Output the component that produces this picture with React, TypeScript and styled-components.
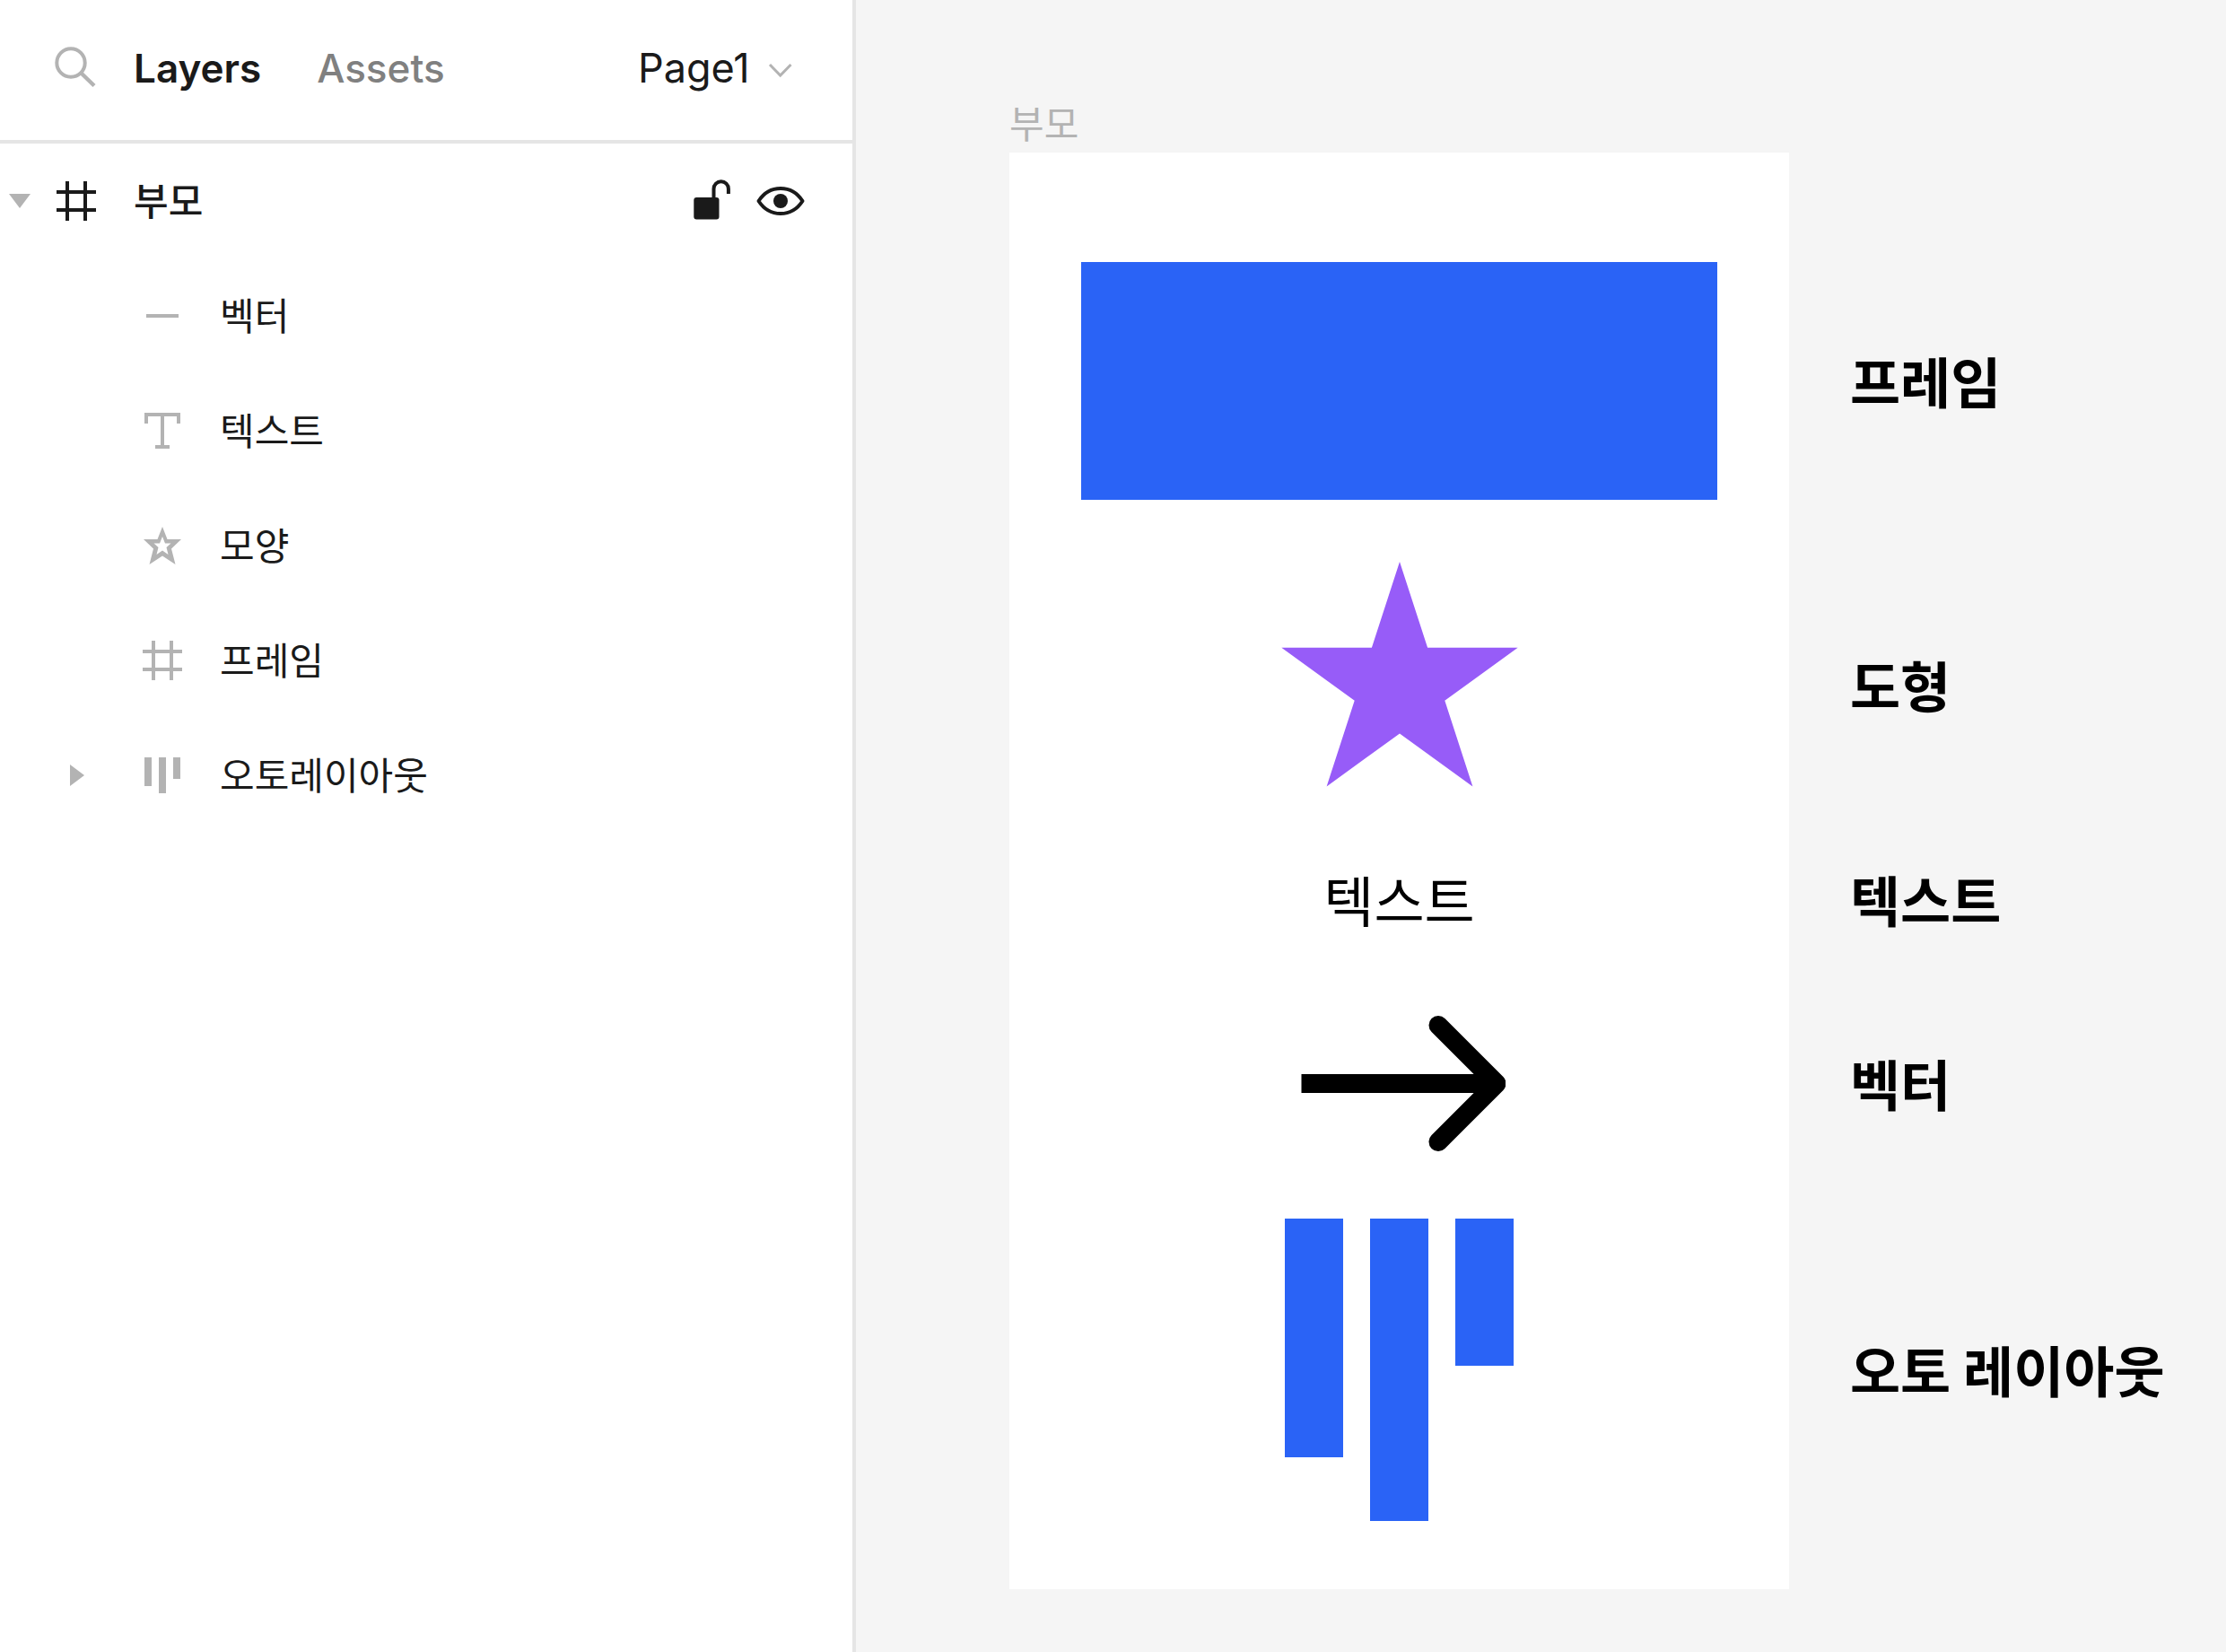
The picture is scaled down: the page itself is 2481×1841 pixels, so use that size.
import React, { useState } from "react";
import styled, { createGlobalStyle } from "styled-components";

const ink = "#1a1a1a";
const muted = "#b3b3b3";
const line = "#e5e5e5";
const blue = "#2a63f6";
const purple = "#975cf8";

const GlobalStyle = createGlobalStyle`
  *, *::before, *::after { box-sizing: border-box; }
  body {
    margin: 0;
    background: #f5f5f5;
    color: ${ink};
    font-family: Inter, "Noto Sans CJK KR", sans-serif;
  }
  button, select {
    margin: 0;
    padding: 0;
    border: 0;
    background: none;
    color: inherit;
    font: inherit;
    cursor: pointer;
  }
  svg { display: block; flex: none; }
`;

/* The specimens and their captions share one set of row heights. */
const specimenRows = "333px 346px 132px 277px 361px";

const Editor = styled.div`
  display: flex;
  min-height: 100vh;
`;

const Sidebar = styled.aside`
  flex: 0 0 954px;
  border-right: 4px solid ${line};
  background: #fff;
`;

const SidebarHeader = styled.header`
  display: flex;
  align-items: center;
  height: 160px;
  padding: 0 66px 4px 61px;
  border-bottom: 4px solid ${line};
  font-size: 44px;
  line-height: 56px;
`;

const IconButton = styled.button`
  display: flex;
  align-items: center;
  justify-content: center;
`;

const Tabs = styled.div`
  display: flex;
  gap: 62px;
  margin-left: 40px;
`;

const Tab = styled.button<{ $active: boolean }>`
  color: ${(p) => (p.$active ? ink : "#808080")};
  font-weight: ${(p) => (p.$active ? 600 : 500)};
`;

const PagePicker = styled.label`
  display: flex;
  align-items: center;
  gap: 20px;
  margin-left: auto;
  font-size: 45px;
`;

const PageSelect = styled.select`
  appearance: none;
  outline: none;
`;

const LayerTree = styled.ul`
  margin: 0;
  padding: 0;
  list-style: none;
`;

const LayerRow = styled.div<{ $nested: boolean }>`
  display: grid;
  grid-template-columns: ${(p) => (p.$nested ? "93px" : "61px")} 48px 1fr auto;
  align-items: center;
  height: 128px;
  padding: 0 52px 0 ${(p) => (p.$nested ? "64px" : "0")};
  color: ${(p) => (p.$nested ? muted : ink)};
`;

const Disclosure = styled.button`
  display: flex;
  align-items: center;
  justify-content: center;
  width: 44px;
  height: 44px;
  color: ${muted};
`;

const LayerIcon = styled.span`
  grid-column: 2;
`;

const LayerName = styled.span<{ $strong: boolean }>`
  padding: 0 0 4px 40px;
  color: ${ink};
  font-family: "Noto Sans CJK KR", sans-serif;
  font-size: 42px;
  font-weight: ${(p) => (p.$strong ? 500 : 400)};
  line-height: 60px;
`;

const LayerActions = styled.div`
  display: flex;
  align-items: center;
  gap: 24px;
`;

const Canvas = styled.main`
  flex: 1;
  display: grid;
  grid-template-columns: 869px 1fr;
  grid-template-rows: 62px auto;
  column-gap: 68px;
  align-content: start;
  padding: 108px 0 70px 171px;
  font-family: "Noto Sans CJK KR", sans-serif;
`;

const BoardTitle = styled.h1`
  grid-column: 1 / -1;
  margin: 0;
  color: ${muted};
  font-size: 42px;
  font-weight: 400;
  line-height: 56px;
`;

const Board = styled.section`
  display: grid;
  grid-template-rows: ${specimenRows};
  align-items: center;
  justify-items: center;
  padding: 88px 80px 64px;
  background: #fff;
`;

const Captions = styled.div`
  display: grid;
  grid-template-rows: ${specimenRows};
  align-items: center;
  padding: 88px 0 64px;
`;

const Caption = styled.h2`
  margin: 0;
  padding-bottom: 2px;
  color: #000;
  font-size: 61px;
  font-weight: 700;
  line-height: 88px;
`;

const FrameSpecimen = styled.div`
  width: 100%;
  height: 265px;
  background: ${blue};
`;

const TextSpecimen = styled.p`
  margin: 0;
  padding-bottom: 2px;
  color: #000;
  font-size: 61px;
  line-height: 88px;
`;

const AutoLayout = styled.div`
  display: flex;
  align-items: flex-start;
  gap: 30px;
`;

const Bar = styled.div<{ $height: number }>`
  width: 65px;
  height: ${(p) => p.$height}px;
  background: ${blue};
`;

type Kind = "frame" | "line" | "text" | "star" | "auto";

const stroke = { fill: "none", stroke: "currentColor", strokeWidth: 4 };

function KindIcon({ kind }: { kind: Kind }) {
  return (
    <svg width="48" height="48" viewBox="0 0 48 48" aria-hidden="true">
      {kind === "frame" && <path {...stroke} d="M14 2v44M34 2v44M2 14h44M2 34h44" />}
      {kind === "line" && <path {...stroke} d="M6 24h36" />}
      {kind === "text" && <path {...stroke} d="M6 16V6h36v10M24 6v36M16 42h16" />}
      {kind === "star" && (
        <path
          fill="currentColor"
          fillRule="evenodd"
          d="M24 3L29.500 17H45L34 27.500 38.500 45 24 35.500 9.500 45 14 27.500 3 17h15.500zM24 14l-3 7.500h-6.500l5 4.500-2 8L24 29.500l6.500 4.500-2-8 5-4.500H27z"
        />
      )}
      {kind === "auto" && <path fill="currentColor" d="M4 4h8v32H4zM20 4h8v40h-8zM36 4h8v24h-8z" />}
    </svg>
  );
}

const SearchIcon = () => (
  <svg width="48" height="48" viewBox="0 0 48 48" aria-hidden="true">
    <circle cx="18" cy="18" r="15.7" fill="none" stroke={muted} strokeWidth="4" />
    <path d="M29.500 29.500L44 43.500" fill="none" stroke={muted} strokeWidth="4.500" />
  </svg>
);

const ChevronIcon = () => (
  <svg width="28" height="28" viewBox="0 0 28 28" aria-hidden="true">
    <path d="M2 10l11.700 12L25.500 10" fill="none" stroke={muted} strokeWidth="3" />
  </svg>
);

const UnlockIcon = () => (
  <svg width="48" height="48" viewBox="0 0 48 48" aria-hidden="true">
    <rect x="3.300" y="20" width="28.200" height="24.500" rx="3" fill="currentColor" />
    <path {...stroke} d="M25.500 22V10.500a8.200 8.200 0 0 1 16.400 0V16" />
  </svg>
);

const EyeIcon = () => (
  <svg width="56" height="56" viewBox="0 0 56 56" aria-hidden="true">
    <path
      {...stroke}
      strokeLinejoin="round"
      d="M3.500 28C10 18 19 14 28 14s18 4 24.500 14C46 38 37 42 28 42S10 38 3.500 28z"
    />
    <circle cx="28" cy="28" r="8" fill="currentColor" />
  </svg>
);

const Triangle = ({ open }: { open: boolean }) =>
  open ? (
    <svg width="24" height="16" viewBox="0 0 24 16" aria-hidden="true">
      <path d="M0 0h24L12 16z" fill="currentColor" />
    </svg>
  ) : (
    <svg width="16" height="24" viewBox="0 0 16 24" aria-hidden="true">
      <path d="M0 0v24l16-12z" fill="currentColor" />
    </svg>
  );

const layers: { name: string; kind: Kind; group?: boolean }[] = [
  { name: "벡터", kind: "line" },
  { name: "텍스트", kind: "text" },
  { name: "모양", kind: "star" },
  { name: "프레임", kind: "frame" },
  { name: "오토레이아웃", kind: "auto", group: true },
];

const captions = ["프레임", "도형", "텍스트", "벡터", "오토 레이아웃"];

export default function App() {
  const [tab, setTab] = useState("Layers");
  const [open, setOpen] = useState(true);

  return (
    <Editor>
      <GlobalStyle />
      <Sidebar>
        <SidebarHeader>
          <IconButton aria-label="Search">
            <SearchIcon />
          </IconButton>
          <Tabs role="tablist">
            {["Layers", "Assets"].map((name) => (
              <Tab
                key={name}
                role="tab"
                aria-selected={tab === name}
                $active={tab === name}
                onClick={() => setTab(name)}
              >
                {name}
              </Tab>
            ))}
          </Tabs>
          <PagePicker>
            <PageSelect aria-label="Page">
              <option>Page1</option>
            </PageSelect>
            <ChevronIcon />
          </PagePicker>
        </SidebarHeader>
        <LayerTree>
          <li>
            <LayerRow $nested={false}>
              <Disclosure aria-label="부모" aria-expanded={open} onClick={() => setOpen(!open)}>
                <Triangle open={open} />
              </Disclosure>
              <LayerIcon>
                <KindIcon kind="frame" />
              </LayerIcon>
              <LayerName $strong>부모</LayerName>
              <LayerActions>
                <IconButton aria-label="Lock">
                  <UnlockIcon />
                </IconButton>
                <IconButton aria-label="Visibility">
                  <EyeIcon />
                </IconButton>
              </LayerActions>
            </LayerRow>
            {open && (
              <LayerTree>
                {layers.map((layer) => (
                  <li key={layer.name}>
                    <LayerRow $nested>
                      {layer.group && (
                        <Disclosure aria-label={layer.name} aria-expanded={false}>
                          <Triangle open={false} />
                        </Disclosure>
                      )}
                      <LayerIcon>
                        <KindIcon kind={layer.kind} />
                      </LayerIcon>
                      <LayerName $strong={false}>{layer.name}</LayerName>
                    </LayerRow>
                  </li>
                ))}
              </LayerTree>
            )}
          </li>
        </LayerTree>
      </Sidebar>
      <Canvas>
        <BoardTitle>부모</BoardTitle>
        <Board>
          <FrameSpecimen />
          <svg width="264" height="277" viewBox="0 0 264 277" aria-hidden="true">
            <path
              fill={purple}
              d="M132 0l31.100 95.700h100.600l-81.400 59.100 31.100 95.700L132 191.400l-81.400 59.100 31.100-95.700L.3 95.700h100.600z"
            />
          </svg>
          <TextSpecimen>텍스트</TextSpecimen>
          <svg width="237" height="151" viewBox="0 0 237 151" aria-hidden="true">
            <g fill="none" stroke="#000" strokeWidth="21">
              <path d="M9.500 75.500H226" />
              <path d="M162 10.500l65 65-65 65" strokeLinecap="round" strokeLinejoin="round" />
            </g>
          </svg>
          <AutoLayout>
            <Bar $height={266} />
            <Bar $height={337} />
            <Bar $height={164} />
          </AutoLayout>
        </Board>
        <Captions>
          {captions.map((text) => (
            <Caption key={text}>{text}</Caption>
          ))}
        </Captions>
      </Canvas>
    </Editor>
  );
}
